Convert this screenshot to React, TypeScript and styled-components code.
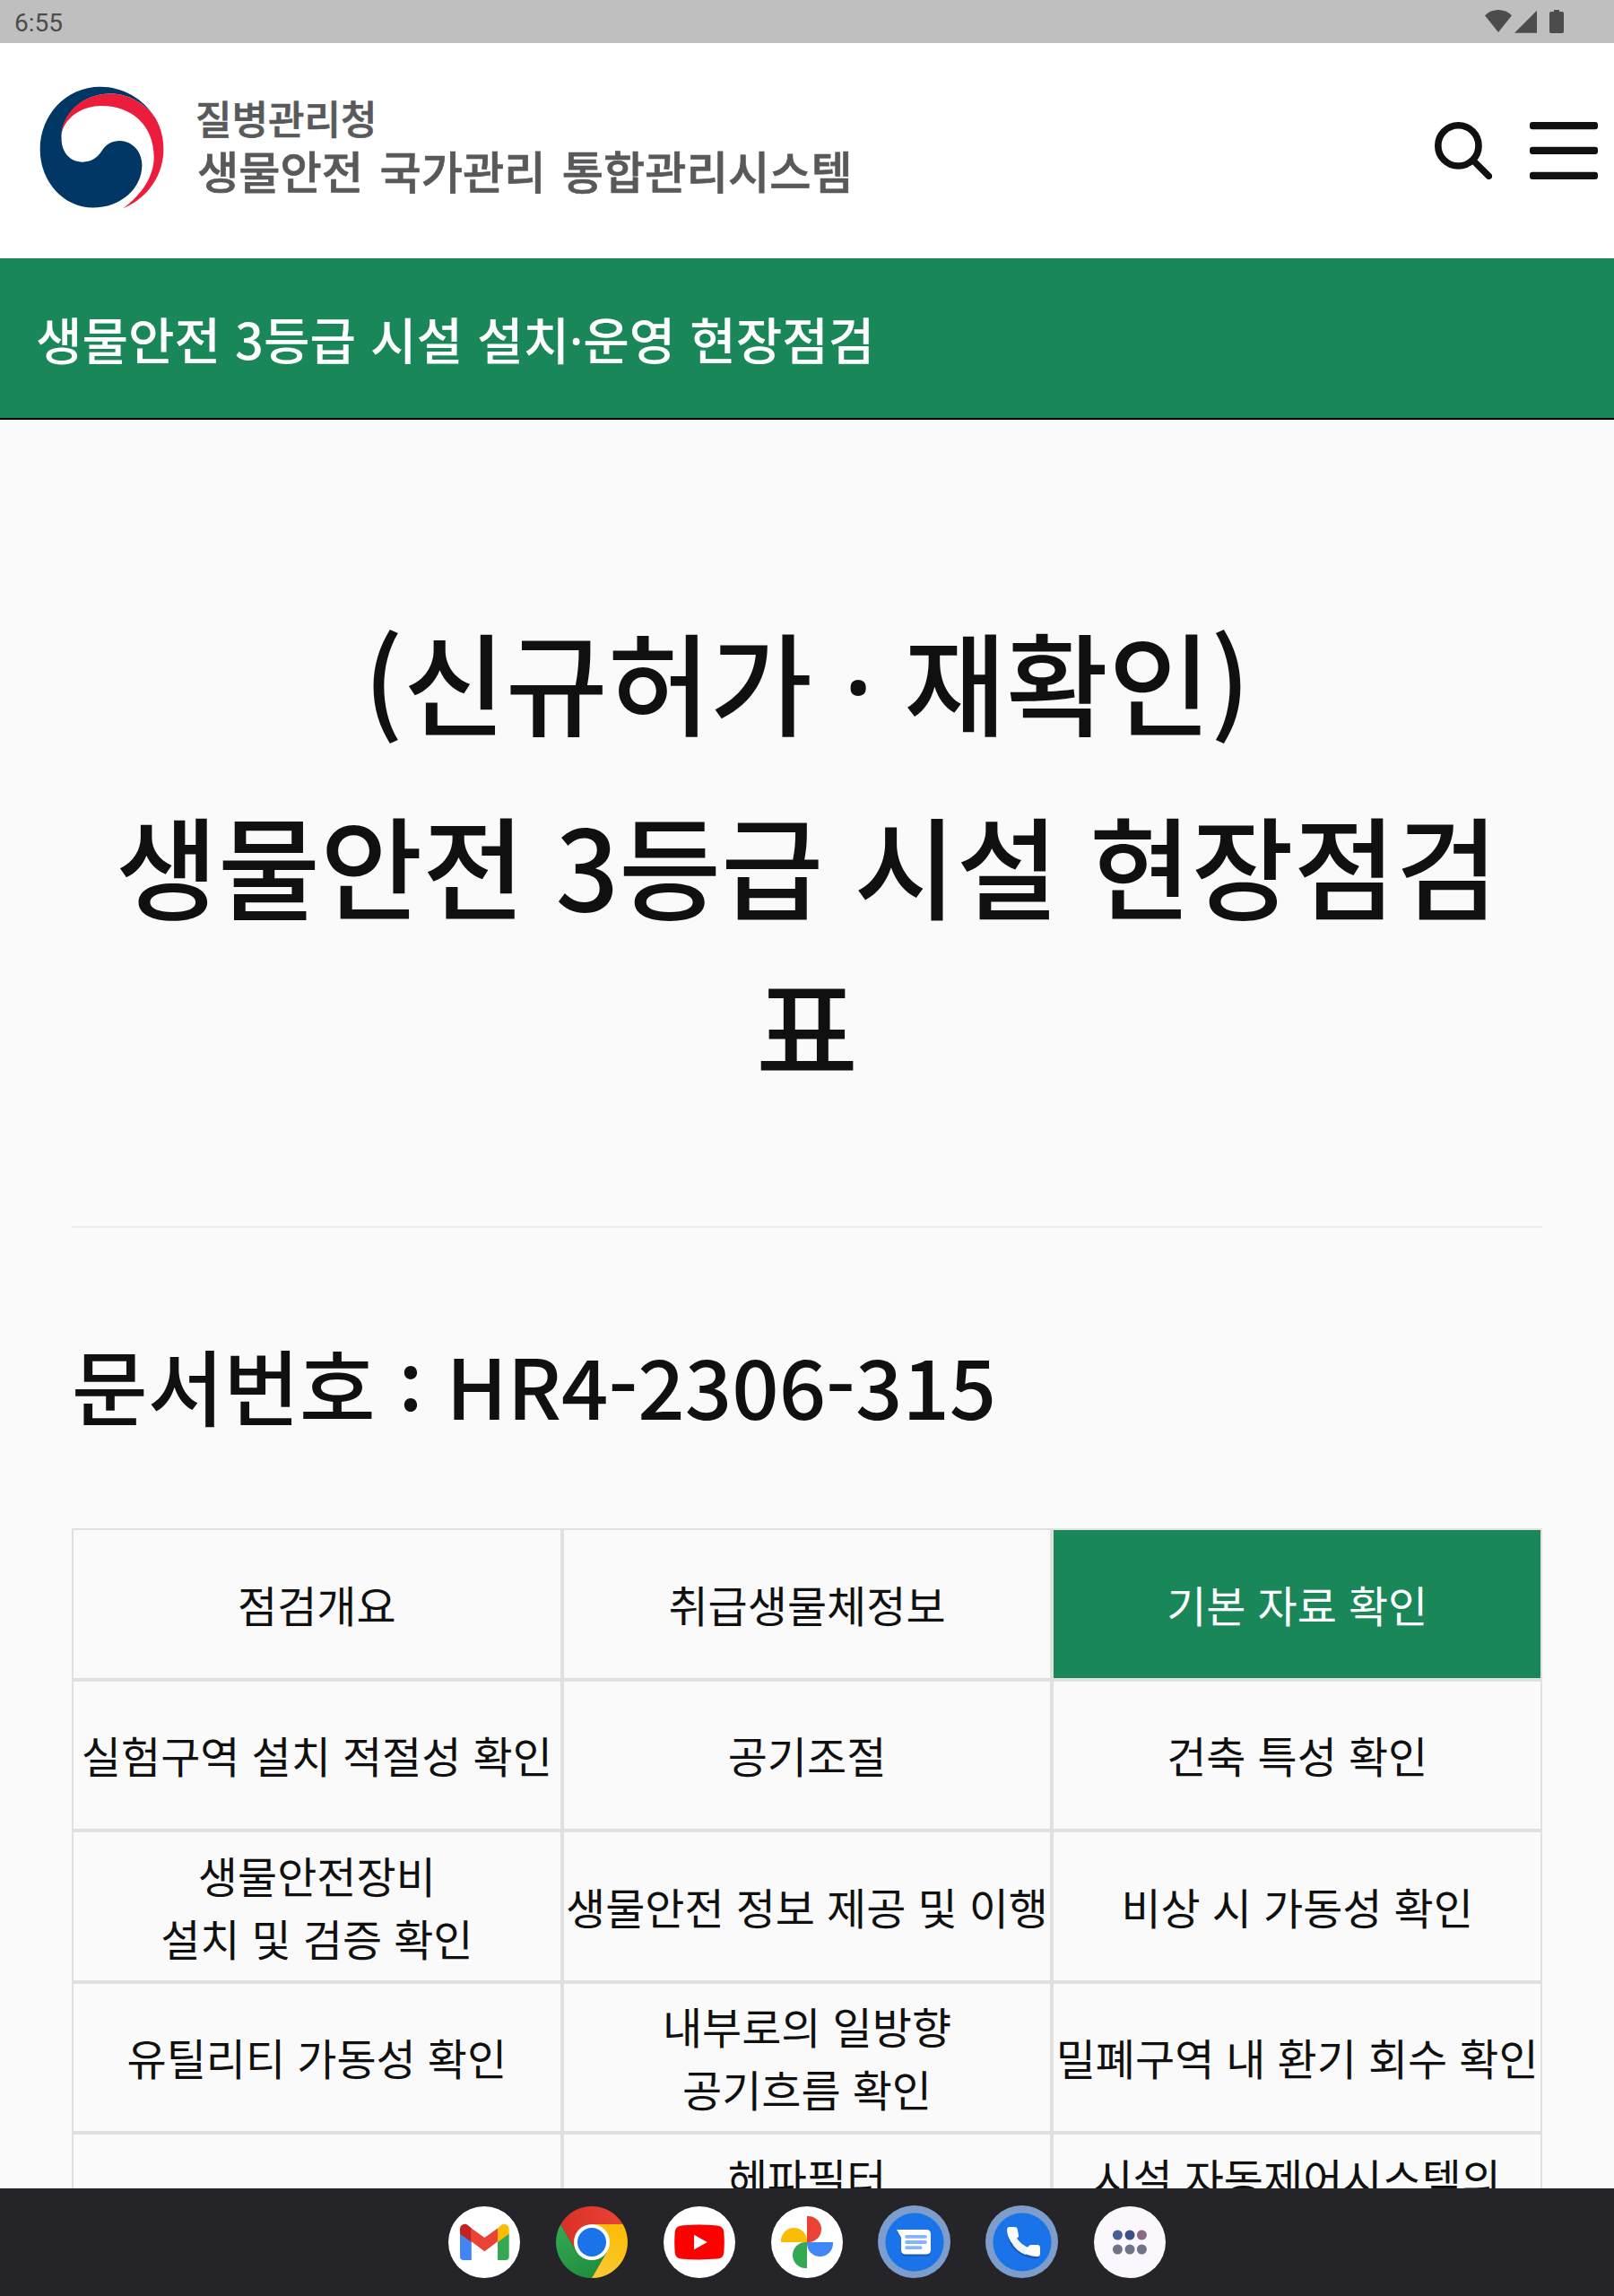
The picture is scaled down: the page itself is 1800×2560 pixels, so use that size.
import React from "react";
import styled, { createGlobalStyle } from "styled-components";

const GlobalStyle = createGlobalStyle`
  * { box-sizing: border-box; }
  html, body { margin: 0; padding: 0; background: #fafafa; }
`;

const Screen = styled.div`
  width: 1800px;
  height: 2560px;
  display: flex;
  flex-direction: column;
  overflow: hidden;
  background: #fafafa;
  color: #101010;
  font-family: "Noto Sans CJK KR", "Noto Sans", sans-serif;
`;

const StatusBar = styled.div`
  flex: none;
  height: 48px;
  padding: 3px 56px 0 16px;
  display: flex;
  align-items: center;
  justify-content: space-between;
  background: #bfbfbf;
  color: #4c4c4c;
  font-family: Roboto, sans-serif;
  font-size: 28px;
`;

const StatusIcons = styled.svg`
  display: block;
  width: 88px;
  height: 26px;
  margin-top: -3px;
`;

const Header = styled.header`
  flex: none;
  height: 240px;
  padding: 0 18px 0 44px;
  display: flex;
  align-items: center;
  justify-content: space-between;
  background: #ffffff;
`;

const Brand = styled.div`
  display: flex;
  align-items: center;
  gap: 35px;
  margin-top: -8px;
`;

const Emblem = styled.svg`
  display: block;
  width: 139px;
  height: 137px;
`;

const BrandText = styled.div`
  display: flex;
  flex-direction: column;
  margin-top: -6px;
  color: #58595b;
  font-weight: 500;
  white-space: nowrap;
  -webkit-text-stroke: 0.7px #58595b;
`;

const BrandAgency = styled.span`
  font-size: 44px;
  line-height: 56px;
`;

const BrandSystem = styled.span`
  font-size: 50.3px;
  line-height: 60px;
  word-spacing: 7px;
  margin-left: 2px;
`;

const Tools = styled.div`
  display: flex;
  gap: 42px;
`;

const SearchIcon = styled.svg`
  display: block;
  width: 64px;
  height: 64px;
`;

const MenuIcon = styled.svg`
  display: block;
  width: 76px;
  height: 64px;
`;

const PageTitle = styled.div`
  flex: none;
  height: 180px;
  padding: 2px 40px 0;
  display: flex;
  align-items: center;
  background: #1a8759;
  border-bottom: 2px solid #000;
  color: #fff;
  font-size: 56px;
  font-weight: 500;
  line-height: 82px;
  word-spacing: 0.06em;
  white-space: nowrap;
`;

const MiddleDot = styled.span`
  font-family: "Noto Sans", sans-serif;
`;

const Content = styled.main`
  flex: 1;
  min-height: 0;
  overflow: hidden;
  padding: 199px 80px 0;
`;

const Heading = styled.div`
  height: 702px;
  border-bottom: 2px solid #eeeeee;
  text-align: center;
  font-size: 124px;
  font-weight: 500;
  line-height: 180px;
  word-spacing: 0.05em;
`;

const HeadingLine = styled.p`
  margin: 0 0 19px;
  word-break: break-all;
`;

const DocumentNumber = styled.h2`
  margin: 0;
  padding-top: 107px;
  height: 335px;
  font-size: 92px;
  font-weight: 500;
  line-height: 134px;
  word-spacing: 0.055em;
`;

const Raised = styled.span<{ $by: number }>`
  display: inline-block;
  line-height: 1;
  transform: translateY(-${(p) => p.$by}px);
`;

const TabGrid = styled.div`
  display: grid;
  grid-template-columns: repeat(3, 1fr);
  grid-auto-rows: 168.5px;
`;

const Tab = styled.div<{ $active?: boolean }>`
  display: flex;
  align-items: center;
  justify-content: center;
  padding-bottom: 1px;
  border: 2px solid #e0e0e0;
  background: ${(p) => (p.$active ? "#1a8759" : "transparent")};
  color: ${(p) => (p.$active ? "#fff" : "#101010")};
  font-size: 48px;
  line-height: 70px;
  word-spacing: 0.048em;
  text-align: center;
  white-space: pre;
`;

const Dock = styled.nav`
  flex: none;
  height: 120px;
  display: flex;
  align-items: center;
  justify-content: center;
  gap: 36px;
  background: #252429;
`;

const AppIcon = styled.svg`
  display: block;
  width: 84px;
  height: 84px;
`;

const tabs: { label: string; active?: boolean }[] = [
  { label: "점검개요" },
  { label: "취급생물체정보" },
  { label: "기본 자료 확인", active: true },
  { label: "실험구역 설치 적절성 확인" },
  { label: "공기조절" },
  { label: "건축 특성 확인" },
  { label: "생물안전장비\n설치 및 검증 확인" },
  { label: "생물안전 정보 제공 및 이행" },
  { label: "비상 시 가동성 확인" },
  { label: "유틸리티 가동성 확인" },
  { label: "내부로의 일방향\n공기흐름 확인" },
  { label: "밀폐구역 내 환기 회수 확인" },
  { label: "" },
  { label: "헤파필터\n설치 확인" },
  { label: "시설 자동제어시스템의\n가동성 확인" },
];

const Gmail = () => (
  <AppIcon viewBox="-42 -42 84 84">
    <circle r="40" fill="#fff" />
    <path d="M-27 -10 L-14.2 -1 V20 H-23 Q-27 20 -27 16Z" fill="#4285f4" />
    <path d="M27.7 -10 L15 -1 V20 H23.7 Q27.7 20 27.7 16Z" fill="#34a853" />
    <path d="M15 -15.5 L18.4 -18.5 C22 -22 27.7 -19.5 27.7 -14.5 V-9.3 L15 0Z" fill="#fbbc04" />
    <path d="M-14.2 -15.5 L0.4 -5 L15 -15.5 V-0.7 L0.4 10.3 L-14.2 -0.7Z" fill="#ea4335" />
    <path d="M-14.2 -15.5 L-17.6 -18.5 C-21.2 -22 -27 -19.5 -27 -14.5 V-9.3 L-14.2 0Z" fill="#c5221f" />
  </AppIcon>
);

const Chrome = () => (
  <AppIcon viewBox="-42 -42 84 84">
    <defs>
      <linearGradient id="chromeRed"><stop offset="0" stopColor="#d93025" /><stop offset="1" stopColor="#ea4335" /></linearGradient>
      <linearGradient id="chromeGreen" x1="0.7" y1="1" x2="0.1" y2="0"><stop offset="0" stopColor="#1e8e3e" /><stop offset="1" stopColor="#34a853" /></linearGradient>
      <linearGradient id="chromeYellow" x1="0.3" y1="1" x2="0.6" y2="0"><stop offset="0" stopColor="#fcc934" /><stop offset="1" stopColor="#fbbc04" /></linearGradient>
    </defs>
    <path d="M-34.64 -20 A40 40 0 0 0 0 40 L17.3 10 L0 0 L-17.3 10Z" fill="url(#chromeGreen)" />
    <path d="M34.64 -20 A40 40 0 0 1 0 40 L17.3 10 L0 -20Z" fill="url(#chromeYellow)" />
    <path d="M-34.64 -20 A40 40 0 0 1 34.64 -20 H0 L-17.3 10Z" fill="url(#chromeRed)" />
    <circle r="20" fill="#fff" />
    <circle r="16" fill="#1a73e8" />
  </AppIcon>
);

const YouTube = () => (
  <AppIcon viewBox="-42 -42 84 84">
    <circle r="40" fill="#fff" />
    <path d="M-20 -18.6 Q0 -20.2 20 -18.6 Q26.5 -18 27.2 -12 Q28.4 0 27.2 12 Q26.5 18 20 18.6 Q0 20.2 -20 18.6 Q-26.5 18 -27.2 12 Q-28.4 0 -27.2 -12 Q-26.5 -18 -20 -18.6Z" fill="#f00" />
    <path d="M-6 -8.3 L8.8 0 L-6 8.3Z" fill="#fff" />
  </AppIcon>
);

const Photos = () => (
  <AppIcon viewBox="-42 -42 84 84">
    <circle r="40" fill="#fff" />
    <path d="M-29 0 V-1.5 A14.5 14.5 0 0 1 0 -1.5 V0Z" fill="#fbbc04" />
    <path d="M0 -29 H1.5 A14.5 14.5 0 0 1 1.5 0 H0Z" fill="#ea4335" />
    <path d="M29 0 V1.5 A14.5 14.5 0 0 1 0 1.5 V0Z" fill="#4285f4" />
    <path d="M0 29 H-1.5 A14.5 14.5 0 0 1 -1.5 0 H0Z" fill="#34a853" />
  </AppIcon>
);

const BlueDisc = () => (
  <>
    <circle cx="-0.5" cy="-0.5" r="40.5" fill="#7d9dcc" />
    <circle r="32.6" fill="#1a73e8" />
  </>
);

const Messages = () => (
  <AppIcon viewBox="-42 -42 84 84">
    <BlueDisc />
    <path d="M-20 -12 H13 Q18 -12 18 -7 V10.5 Q18 15.5 13 15.5 H-10 Q-15 15.5 -15 10.5 V-4Z" fill="#1558b8" />
    <path d="M-20 -14 H13 Q18 -14 18 -9 V8.5 Q18 13.5 13 13.5 H-10 Q-15 13.5 -15 8.5 V-5Z" fill="#fff" />
    <path d="M-9 -6.2 H12 M-9 0 H12 M-9 6.2 H6.5" stroke="#8ab4f8" strokeWidth="3.8" strokeLinecap="round" />
  </AppIcon>
);

const Phone = () => (
  <AppIcon viewBox="-42 -42 84 84">
    <BlueDisc />
    <path d="M-16 -11 C-16 -16 -14 -15 -6 -15 L-4 -6 L-11 1 Q-6 10 4 14 L8 6 L18 7 Q20 17 17 18 C1 19 -17 7 -16 -11Z" fill="#1558b8" />
    <path d="M-12.5 -0.5 Q-6.5 10.5 4 14 L8 6 Q-0.5 4 -6 -4.5Z" fill="#f1f3f4" />
    <path d="M-14 -17 H-8.5 Q-5.6 -17 -5.2 -14 L-4 -7.5 Q-3.8 -6 -5 -5 L-12.3 0 C-15.5 -5 -17 -10 -17 -14 Q-17 -17 -14 -17Z" fill="#fff" />
    <path d="M7 4.5 Q8 3 9.8 3 L17 3 Q20 3.4 20 6.4 V12.5 Q20 16 16.5 16 C11.5 16 7 14.7 2.5 12.6Z" fill="#fff" />
  </AppIcon>
);

const AllApps = () => (
  <AppIcon viewBox="-42 -42 84 84">
    <circle r="40" fill="#faf8fd" />
    <circle cx="-13.6" cy="-8" r="5.5" fill="#4a5f96" />
    <circle cx="0" cy="-8" r="5.5" fill="#3c5084" />
    <circle cx="13.4" cy="-8" r="5.5" fill="#8b6788" />
    <circle cx="-13.6" cy="8" r="5.5" fill="#6f7489" />
    <circle cx="0" cy="8" r="5.5" fill="#6f7489" />
    <circle cx="13.4" cy="8" r="5.5" fill="#6f7489" />
  </AppIcon>
);

export default function App() {
  return (
    <>
      <GlobalStyle />
      <Screen>
        <StatusBar>
          <span>6:55</span>
          <StatusIcons viewBox="468 33 264 78" fill="#4c4c4c">
            <path d="M468 52 C493 27 533 27 558 52 L513 108Z" />
            <path d="M567 110 L642 35 V110Z" />
            <path d="M699 33 H717 V39 H727 Q732 39 732 44 V106 Q732 111 727 111 H689 Q684 111 684 106 V44 Q684 39 689 39 H699Z" />
          </StatusIcons>
        </StatusBar>
        <Header>
          <Brand>
            <Emblem viewBox="131 108 418 411">
              <path d="M520 215 C480 150 410 110 335 110 C220 110 133 205 133 320 C133 430 215 515 310 515 C405 515 475 450 475 372 C475 325 440 291 400 291 C375 291 355 302 340 325 C325 348 305 362 275 362 C235 362 205 330 205 285 C200 220 260 133 370 133 C430 133 485 165 520 215Z" fill="#003764" />
              <path d="M205 265 C215 185 285 133 370 133 C430 133 485 165 520 215 C540 250 547 285 547 320 C547 400 500 480 412 517 C475 470 515 410 515 345 C515 240 440 174 340 174 C275 174 220 210 205 265Z" fill="#ec1c3c" />
            </Emblem>
            <BrandText>
              <BrandAgency>질병관리청</BrandAgency>
              <BrandSystem>생물안전 국가관리 통합관리시스템</BrandSystem>
            </BrandText>
          </Brand>
          <Tools>
            <SearchIcon viewBox="0 0 64 64" fill="none" stroke="#101010">
              <circle cx="26.4" cy="26.4" r="22.6" strokeWidth="7.6" />
              <path d="M43.5 43.5 L60.4 60.4" strokeWidth="7.4" strokeLinecap="round" />
            </SearchIcon>
            <MenuIcon viewBox="0 0 76 64" fill="#101010">
              <rect y="0" width="76" height="8.3" rx="3" />
              <rect y="27.8" width="76" height="8.3" rx="3" />
              <rect y="55.7" width="76" height="8.3" rx="3" />
            </MenuIcon>
          </Tools>
        </Header>
        <PageTitle>
          <span>
            생물안전 3등급 시설 설치<MiddleDot>·</MiddleDot>운영 현장점검
          </span>
        </PageTitle>
        <Content>
          <Heading>
            <HeadingLine>
              <Raised $by={7}>(</Raised>신규허가 <MiddleDot>·</MiddleDot> 재확인<Raised $by={7}>)</Raised>
            </HeadingLine>
            <HeadingLine>생물안전 3등급 시설 현장점검표</HeadingLine>
          </Heading>
          <DocumentNumber>
            문서번호 <Raised $by={10}>:</Raised> HR4<Raised $by={10}>-</Raised>2306<Raised $by={10}>-</Raised>315
          </DocumentNumber>
          <TabGrid>
            {tabs.map((tab, i) => (
              <Tab key={i} $active={tab.active}>
                {tab.label}
              </Tab>
            ))}
          </TabGrid>
        </Content>
        <Dock>
          <Gmail />
          <Chrome />
          <YouTube />
          <Photos />
          <Messages />
          <Phone />
          <AllApps />
        </Dock>
      </Screen>
    </>
  );
}
